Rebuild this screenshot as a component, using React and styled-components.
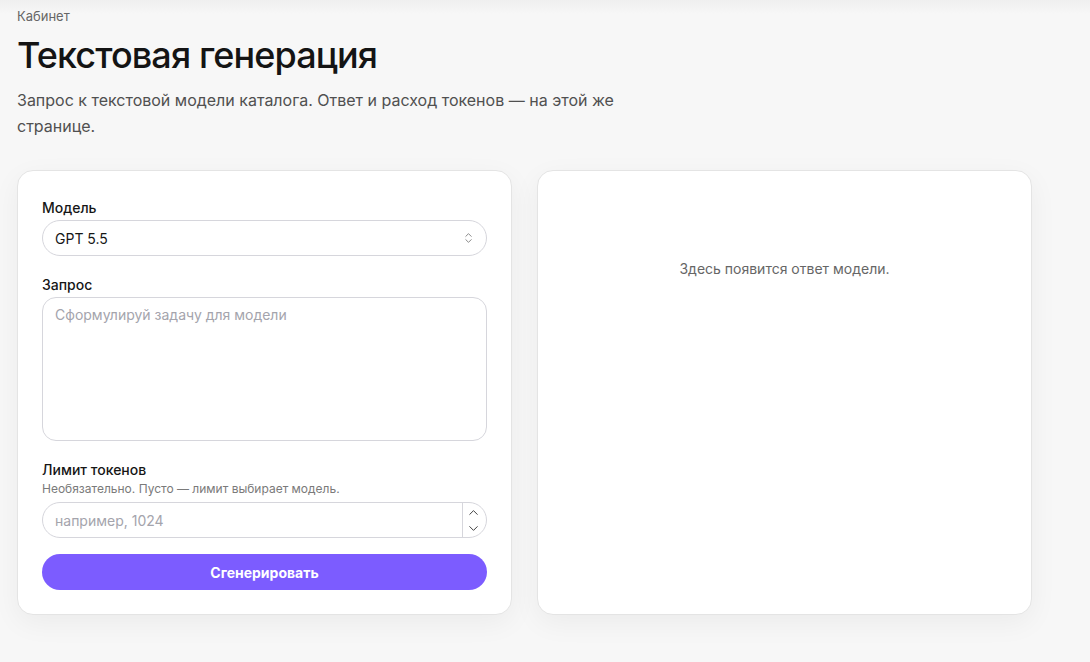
import React, { useState } from "react";
import styled, { createGlobalStyle } from "styled-components";
import { ChevronsUpDown, ChevronUp, ChevronDown } from "lucide-react";

const GlobalStyle = createGlobalStyle`
  * { box-sizing: border-box; }
  html, body { margin: 0; padding: 0; }
  body {
    background: linear-gradient(#efefef 0, #f7f7f7 14px, #f7f7f7 100%);
    font-family: Inter, "Noto Sans", sans-serif;
    color: #1a1a1a;
    min-height: 100vh;
  }
`;

function App() {
  const [model, setModel] = useState("gpt-5.5");
  const [limit, setLimit] = useState("");

  return (
    <Page>
      <GlobalStyle />
      <Header>
        <Crumb>Кабинет</Crumb>
        <Title>Текстовая генерация</Title>
        <Lead>
          Запрос к текстовой модели каталога. Ответ и расход токенов — на этой же
          странице.
        </Lead>
      </Header>

      <Grid>
        <Card as="form" onSubmit={(e) => e.preventDefault()}>
          <Field>
            <Label>Модель</Label>
            <SelectWrap>
              <Select value={model} onChange={(e) => setModel(e.target.value)}>
                <option value="gpt-5.5">GPT 5.5</option>
              </Select>
              <SelectIcon>
                <ChevronsUpDown size={13} strokeWidth={1.6} />
              </SelectIcon>
            </SelectWrap>
          </Field>

          <Field>
            <Label>Запрос</Label>
            <TextArea placeholder="Сформулируй задачу для модели" />
          </Field>

          <Field $last>
            <Label>Лимит токенов</Label>
            <Hint>Необязательно. Пусто — лимит выбирает модель.</Hint>
            <NumberBox>
              <NumberInput
                type="text"
                inputMode="numeric"
                placeholder="например, 1024"
                value={limit}
                onChange={(e) => setLimit(e.target.value)}
              />
              <Stepper>
                <StepBtn type="button">
                  <ChevronUp size={15} strokeWidth={1.5} />
                </StepBtn>
                <StepBtn type="button">
                  <ChevronDown size={15} strokeWidth={1.5} />
                </StepBtn>
              </Stepper>
            </NumberBox>
          </Field>

          <Submit type="submit">Сгенерировать</Submit>
        </Card>

        <Card>
          <Empty>Здесь появится ответ модели.</Empty>
        </Card>
      </Grid>
    </Page>
  );
}

export default App;

const Page = styled.main`
  padding: 8px 17px 48px;
  width: 1049px;
`;

const Header = styled.header`
  display: flex;
  flex-direction: column;
`;

const Crumb = styled.div`
  font-size: 13px;
  line-height: 16px;
  color: #666;
`;

const Title = styled.h1`
  margin: 10px 0 0;
  font-size: 36px;
  line-height: 42px;
  font-weight: 500;
  letter-spacing: -0.025em;
  color: #141414;
`;

const Lead = styled.p`
  margin: 11px 0 0;
  max-width: 630px;
  font-size: 16px;
  line-height: 26px;
  color: #505050;
`;

const Grid = styled.div`
  margin-top: 31px;
  display: grid;
  grid-template-columns: 1fr 1fr;
  gap: 25px;
`;

const Card = styled.section`
  background: #fff;
  border: 1px solid #e4e4e4;
  border-radius: 16px;
  box-shadow: 0 8px 28px rgba(0, 0, 0, 0.05);
  padding: 27px 24px 24px;
  display: flex;
  flex-direction: column;
  min-height: 444px;
`;

const Field = styled.div`
  display: flex;
  flex-direction: column;
  margin-bottom: ${(p) => (p.$last ? "16px" : "19px")};
`;

const Label = styled.label`
  font-size: 14px;
  line-height: 20px;
  font-weight: 500;
  color: #161616;
  margin-bottom: 2px;
`;

const Hint = styled.div`
  font-size: 12px;
  line-height: 16px;
  color: #7a7a7a;
  margin: -1px 0 5px;
`;

const SelectWrap = styled.div`
  position: relative;
`;

const Select = styled.select`
  appearance: none;
  width: 100%;
  height: 36px;
  border: 1px solid #d6d6dc;
  border-radius: 999px;
  background: #fff;
  padding: 0 36px 0 12px;
  font: inherit;
  font-size: 14px;
  color: #161616;
  outline: none;
`;

const SelectIcon = styled.span`
  position: absolute;
  right: 12px;
  top: 50%;
  transform: translateY(-50%);
  display: flex;
  color: #777;
  pointer-events: none;
`;

const TextArea = styled.textarea`
  height: 144px;
  resize: none;
  border: 1px solid #d6d6dc;
  border-radius: 14px;
  padding: 7px 12px;
  font: inherit;
  font-size: 14px;
  line-height: 20px;
  outline: none;

  &::placeholder {
    color: #a4a4ac;
  }
`;

const NumberBox = styled.div`
  display: flex;
  height: 36px;
  border: 1px solid #d6d6dc;
  border-radius: 999px;
  overflow: hidden;
  background: #fff;
`;

const NumberInput = styled.input`
  flex: 1;
  min-width: 0;
  border: 0;
  padding: 0 12px;
  font: inherit;
  font-size: 14px;
  outline: none;
  background: transparent;

  &::placeholder {
    color: #a4a4ac;
  }
`;

const Stepper = styled.div`
  width: 24px;
  border-left: 1px solid #d6d6dc;
  display: flex;
  flex-direction: column;
  justify-content: space-between;
  padding: 1px 0;
`;

const StepBtn = styled.button`
  flex: 1;
  border: 0;
  background: transparent;
  padding: 0 3px 0 0;
  display: flex;
  align-items: center;
  justify-content: center;
  color: #333;
  cursor: pointer;
`;

const Submit = styled.button`
  height: 36px;
  border: 0;
  border-radius: 999px;
  background: #7c5cff;
  color: #fff;
  font: inherit;
  font-size: 14px;
  font-weight: 700;
  cursor: pointer;
`;

const Empty = styled.p`
  margin: 62px 0 0;
  text-align: center;
  font-size: 14px;
  line-height: 18px;
  color: #666;
`;
